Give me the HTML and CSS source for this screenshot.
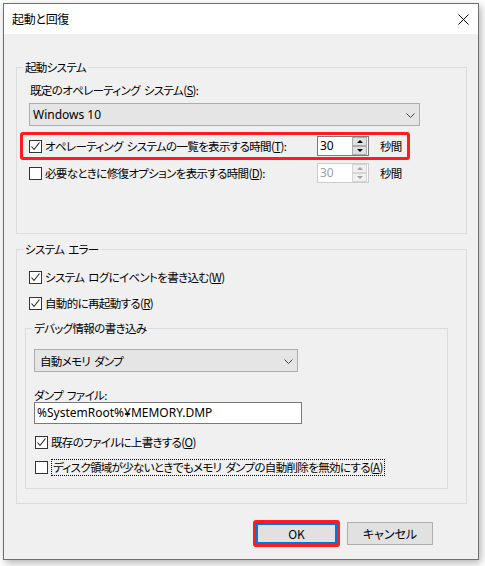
FILE: index.html
```html
<!DOCTYPE html>
<html lang="ja">
<head>
<meta charset="utf-8">
<title>起動と回復</title>
<link rel="stylesheet" href="styles.css">
</head>
<body>
<div class="window">
  <div class="titlebar">
    <span class="title">起動と回復</span>
    <svg class="close" width="11" height="11" viewBox="0 0 11 11"><path d="M0.5 0.5 L10.5 10.5 M10.5 0.5 L0.5 10.5" stroke="#000" stroke-width="1" fill="none"/></svg>
  </div>
  <div class="content">
    <fieldset class="group g1">
      <legend>起動システム</legend>
      <div class="gbody b1">
        <div class="label">既定のオペレーティング システム(<u>S</u>):</div>
        <div class="select wide"><span class="latin">Windows 10</span><svg width="9" height="5" viewBox="0 0 9 5"><path d="M0.5 0.5 L4.5 4.5 L8.5 0.5" stroke="#444" fill="none"/></svg></div>
        <div class="trow highlight">
          <label class="check"><span class="box"><svg width="11" height="11" viewBox="0 0 11 11"><path d="M1.5 5.5 L4 8.5 L9.5 1.5" stroke="#222" stroke-width="1.1" fill="none"/></svg></span><span>オペレーティング システムの一覧を表示する時間(<u>T</u>):</span></label>
          <div class="spin"><span class="val latin">30</span><span class="btns"><span class="sb"><i class="up"></i></span><span class="sb"><i class="down"></i></span></span></div>
          <span class="unit">秒間</span>
        </div>
        <div class="trow plain">
          <label class="check"><span class="box"></span><span>必要なときに修復オプションを表示する時間(<u>D</u>):</span></label>
          <div class="spin disabled"><span class="val latin">30</span><span class="btns"><span class="sb"><i class="up"></i></span><span class="sb"><i class="down"></i></span></span></div>
          <span class="unit">秒間</span>
        </div>
      </div>
    </fieldset>

    <fieldset class="group g2">
      <legend>システム エラー</legend>
      <div class="gbody b2">
        <label class="check row-w"><span class="box"><svg width="11" height="11" viewBox="0 0 11 11"><path d="M1.5 5.5 L4 8.5 L9.5 1.5" stroke="#222" stroke-width="1.1" fill="none"/></svg></span><span>システム ログにイベントを書き込む(<u>W</u>)</span></label>
        <label class="check row-r"><span class="box"><svg width="11" height="11" viewBox="0 0 11 11"><path d="M1.5 5.5 L4 8.5 L9.5 1.5" stroke="#222" stroke-width="1.1" fill="none"/></svg></span><span>自動的に再起動する(<u>R</u>)</span></label>
        <fieldset class="group g3">
          <legend>デバッグ情報の書き込み</legend>
          <div class="gbody b3">
            <div class="select narrow"><span>自動メモリ ダンプ</span><svg width="9" height="5" viewBox="0 0 9 5"><path d="M0.5 0.5 L4.5 4.5 L8.5 0.5" stroke="#444" fill="none"/></svg></div>
            <div class="label dump">ダンプ ファイル:</div>
            <div class="textbox latin">%SystemRoot%¥MEMORY.DMP</div>
            <label class="check row-o"><span class="box"><svg width="11" height="11" viewBox="0 0 11 11"><path d="M1.5 5.5 L4 8.5 L9.5 1.5" stroke="#222" stroke-width="1.1" fill="none"/></svg></span><span>既存のファイルに上書きする(<u>O</u>)</span></label>
            <label class="check row-a"><span class="box"></span><span class="focus">ディスク領域が少ないときでもメモリ ダンプの自動削除を無効にする(<u>A</u>)</span></label>
          </div>
        </fieldset>
      </div>
    </fieldset>

    <div class="buttons">
      <div class="okframe"><button class="btn ok">OK</button></div>
      <button class="btn cancel">キャンセル</button>
    </div>
  </div>
</div>
</body>
</html>
```

FILE: styles.css
```css
html, body {
  margin: 0;
  padding: 0;
  background: #ffffff;
}
body {
  font-family: "Noto Sans CJK JP", "Noto Sans", sans-serif;
  font-size: 11.5px;
  letter-spacing: -0.65px;
  word-spacing: 2px;
  font-feature-settings: "palt";
  color: #000;
  width: 485px;
  height: 566px;
  overflow: hidden;
}
.latin {
  font-family: "Noto Sans", "Noto Sans CJK JP", sans-serif;
  font-size: 12px;
  letter-spacing: 0;
  word-spacing: 0;
}
.window {
  margin: 3px 0 0 3px;
  width: 476px;
  height: 557px;
  box-sizing: border-box;
  border: 1px solid #6e6e6e;
  background: #f0f0f0;
  display: flex;
  flex-direction: column;
  box-shadow: 2px 3px 8px rgba(0, 0, 0, 0.3);
}
.titlebar {
  height: 30px;
  flex: none;
  background: #ffffff;
  display: flex;
  align-items: center;
  justify-content: space-between;
  padding: 0 9px 0 8px;
}
.title {
  line-height: 16px;
  margin-top: -1px;
  font-size: 12px;
  letter-spacing: -0.3px;
}
.close {
  display: block;
  margin-top: 1px;
}
.content {
  flex: 1;
  padding: 0 11px 0 12px;
  display: flex;
  flex-direction: column;
}
.group {
  margin: 0;
  padding: 0;
  border: 1px solid #dcdcdc;
  min-width: 0;
}
.group legend {
  padding: 0 2px;
  margin-left: 6px;
  line-height: 16px;
}
.g1 {
  margin-top: 25px;
}
.g2 {
  margin-top: 7px;
}
.g3 {
  margin-top: 9px;
  width: 423px;
  box-sizing: border-box;
}
.b1 {
  padding: 7px 0 49px 12px;
}
.b2 {
  padding: 12px 0 14px 8px;
}
.b3 {
  padding: 13px 0 12px 8px;
}
.label {
  line-height: 16px;
  padding-left: 1px;
}
.select {
  box-sizing: border-box;
  height: 23px;
  border: 1px solid #adadad;
  background: #e5e5e5;
  display: flex;
  align-items: center;
  justify-content: space-between;
  padding: 0 4px 0 3px;
}
.select svg {
  display: block;
  margin-top: 1px;
}
.select.wide {
  margin-top: 5px;
  width: 391px;
}
.select.narrow {
  width: 264px;
  padding-left: 5px;
}
.trow {
  display: grid;
  grid-template-columns: 277px 52px auto;
  column-gap: 11px;
  align-items: center;
  box-sizing: border-box;
}
.trow.highlight {
  margin-top: 6px;
  margin-left: -9px;
  width: 390px;
  height: 28px;
  border: 3px solid #ff1c1c;
  border-radius: 3px;
  padding-left: 6px;
}
.trow.plain {
  margin-top: 2px;
  height: 22px;
}
.check {
  display: flex;
  align-items: center;
  gap: 3px;
  line-height: 16px;
  white-space: nowrap;
}
.box {
  width: 13px;
  height: 13px;
  box-sizing: border-box;
  border: 1px solid #333;
  background: #fff;
  flex: none;
  display: flex;
  align-items: center;
  justify-content: center;
}
.box svg {
  display: block;
}
.spin {
  height: 20px;
  box-sizing: border-box;
  border: 1px solid #7a7a7a;
  background: #fff;
  display: flex;
  justify-content: space-between;
}
.spin .val {
  line-height: 18px;
  padding-left: 2px;
}
.spin .btns {
  display: flex;
  flex-direction: column;
  width: 15px;
  padding: 0 1px 0 0;
}
.sb {
  flex: 1;
  box-sizing: border-box;
  border: 1px solid #adadad;
  background: #e1e1e1;
  display: flex;
  align-items: center;
  justify-content: center;
}
.sb i {
  width: 0;
  height: 0;
  border-left: 3px solid transparent;
  border-right: 3px solid transparent;
}
.sb i.up {
  border-bottom: 3px solid #000;
}
.sb i.down {
  border-top: 3px solid #000;
}
.spin.disabled {
  border-color: #cccccc;
  color: #a0a0a0;
}
.spin.disabled .sb {
  border-color: #d5d5d5;
  background: #f0f0f0;
}
.spin.disabled .sb i.up {
  border-bottom-color: #a0a0a0;
}
.spin.disabled .sb i.down {
  border-top-color: #a0a0a0;
}
.unit {
  line-height: 16px;
  white-space: nowrap;
}
.row-w {
  padding-left: 4px;
}
.row-r {
  padding-left: 4px;
  margin-top: 10px;
}
.label.dump {
  margin-top: 16px;
  line-height: 14px;
  padding-left: 0;
}
.textbox {
  width: 268px;
  height: 22px;
  box-sizing: border-box;
  border: 1px solid #7a7a7a;
  background: #fff;
  line-height: 20px;
  padding-left: 2px;
}
.row-o {
  margin-top: 10px;
  padding-left: 1px;
}
.row-a {
  margin-top: 9px;
  padding-left: 1px;
  line-height: 15px;
}
.focus {
  border: 1px dotted #000;
  padding: 0 1px;
}
.buttons {
  display: flex;
  justify-content: flex-end;
  align-items: center;
  gap: 7px;
  margin-top: 16px;
  padding-right: 34px;
}
.okframe {
  width: 87px;
  height: 27px;
  box-sizing: border-box;
  border: 3px solid #ff1c1c;
  border-radius: 3px;
  display: flex;
}
.btn {
  font-family: inherit;
  font-size: 12px;
  letter-spacing: 0;
  font-feature-settings: "palt";
  color: #000;
  margin: 0;
  padding: 0;
  box-sizing: border-box;
  background: #e1e1e1;
}
.btn.ok {
  flex: 1;
  border: 2px solid #0078d7;
}
.btn.cancel {
  width: 86px;
  height: 23px;
  border: 1px solid #adadad;
}
```
